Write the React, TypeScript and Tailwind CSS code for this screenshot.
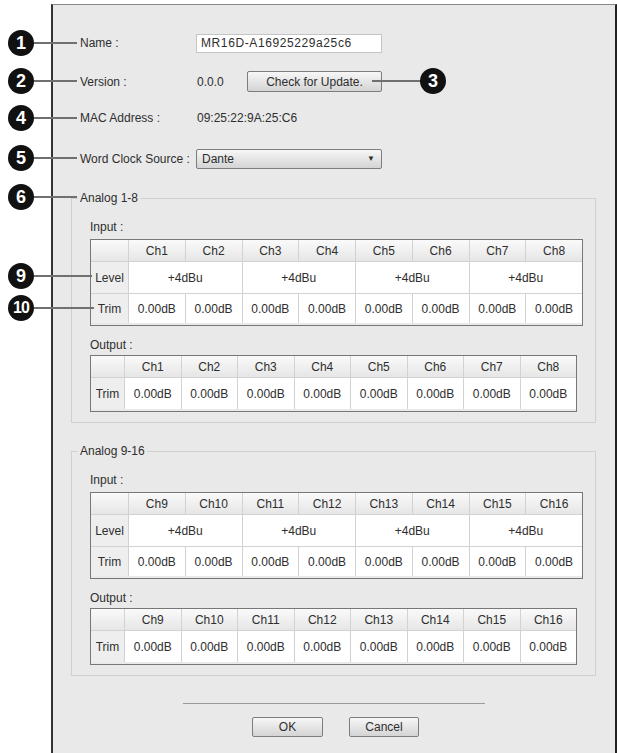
import React from "react";

const chs1 = ["Ch1", "Ch2", "Ch3", "Ch4", "Ch5", "Ch6", "Ch7", "Ch8"];
const chs2 = ["Ch9", "Ch10", "Ch11", "Ch12", "Ch13", "Ch14", "Ch15", "Ch16"];

const callouts = [
  { n: "1", circle: "left-[8px] top-[30px]", line: "left-[30px] top-[42px] w-[47px]" },
  { n: "2", circle: "left-[8px] top-[68px]", line: "left-[30px] top-[80px] w-[47px]" },
  { n: "3", circle: "left-[420px] top-[68px]", line: "left-[372px] top-[80px] w-[52px]" },
  { n: "4", circle: "left-[8px] top-[105px]", line: "left-[30px] top-[117px] w-[47px]" },
  { n: "5", circle: "left-[8px] top-[145px]", line: "left-[30px] top-[157px] w-[47px]" },
  { n: "6", circle: "left-[8px] top-[184px]", line: "left-[30px] top-[196px] w-[47px]" },
  { n: "9", circle: "left-[8px] top-[263px]", line: "left-[30px] top-[275px] w-[62px]" },
  { n: "10", circle: "left-[8px] top-[295px]", line: "left-[30px] top-[307px] w-[64px]" },
];

function HeadCell({ children }: { children?: React.ReactNode }) {
  return (
    <div className="flex items-center justify-center bg-gradient-to-b from-[#fafafa] to-[#e6e6e6]">
      {children}
    </div>
  );
}

function SideCell({ children }: { children: React.ReactNode }) {
  return <div className="flex items-center justify-center bg-[#eeeeee]">{children}</div>;
}

function Cell({ children, wide }: { children: React.ReactNode; wide?: boolean }) {
  return (
    <div className={"flex items-center justify-center bg-white " + (wide ? "col-span-2" : "")}>
      {children}
    </div>
  );
}

function InputTable({ chs }: { chs: string[] }) {
  return (
    <div className="w-[493px] border border-[#777777] bg-[#e9e9e9]">
      <div className="grid grid-cols-[37px_repeat(8,minmax(0,1fr))] grid-rows-[21px_31px_29px] gap-px bg-[#d2d2d2]">
        <HeadCell />
        {chs.map((c) => (
          <HeadCell key={c}>{c}</HeadCell>
        ))}
        <SideCell>Level</SideCell>
        {[0, 1, 2, 3].map((i) => (
          <Cell key={i} wide>
            +4dBu
          </Cell>
        ))}
        <SideCell>Trim</SideCell>
        {chs.map((c) => (
          <Cell key={c}>0.00dB</Cell>
        ))}
      </div>
      <div className="h-[2px]" />
    </div>
  );
}

function OutputTable({ chs }: { chs: string[] }) {
  return (
    <div className="w-[487px] border border-[#777777] bg-[#e9e9e9]">
      <div className="grid grid-cols-[33px_repeat(8,minmax(0,1fr))] grid-rows-[21px_31px] gap-px bg-[#d2d2d2]">
        <HeadCell />
        {chs.map((c) => (
          <HeadCell key={c}>{c}</HeadCell>
        ))}
        <SideCell>Trim</SideCell>
        {chs.map((c) => (
          <Cell key={c}>0.00dB</Cell>
        ))}
      </div>
      <div className="h-[2px]" />
    </div>
  );
}

function Group({ title, chs, className }: { title: string; chs: string[]; className: string }) {
  return (
    <fieldset className={"ml-[18px] w-[525px] border border-[#d0d0d0] " + className}>
      <legend className="ml-[6px] px-[2px] leading-[14px]">{title}</legend>
      <div className="pl-[18px] pb-[10px]">
        <div className="mt-[15px] leading-[14px]">Input :</div>
        <div className="mt-[5px]">
          <InputTable chs={chs} />
        </div>
        <div className="mt-[12px] leading-[14px]">Output :</div>
        <div className="mt-[3px]">
          <OutputTable chs={chs} />
        </div>
      </div>
    </fieldset>
  );
}

function Btn({ children, className }: { children: React.ReactNode; className: string }) {
  return (
    <div
      className={
        "flex items-center justify-center rounded-[2px] border border-[#7d7d7d] bg-gradient-to-b from-[#f7f7f7] to-[#d4d4d4] " +
        className
      }
    >
      {children}
    </div>
  );
}

function Select() {
  return (
    <div className="flex h-[20px] w-[186px] items-center justify-between rounded-[2px] border border-[#7d7d7d] bg-gradient-to-b from-[#f7f7f7] to-[#d4d4d4] pl-[5px] pr-[6px]">
      <span>Dante</span>
      <span className="text-[8px]">▼</span>
    </div>
  );
}

export default function App() {
  return (
    <div className="relative h-[753px] w-[617px] overflow-hidden bg-white pl-[51px] pt-[4px] font-['Liberation_Sans',Arial,sans-serif] text-[12px] text-[#2e2e2e]">
      <div className="h-[749px] w-[566px] border-l-2 border-r-2 border-t border-l-[#333333] border-r-[#222222] border-t-[#8a8a8a] bg-[#e9e9e9]">
        <div className="pl-[27px]">
          <div className="mt-[28px] flex h-[20px] items-center">
            <span className="w-[116px]">Name :</span>
            <div className="flex h-[19px] w-[186px] items-center border border-[#c4c4c4] bg-white px-[4px] tracking-[0.6px]">
              MR16D-A16925229a25c6
            </div>
          </div>
          <div className="mt-[18px] flex h-[21px] items-center">
            <span className="w-[116px]">Version :</span>
            <span className="w-[51px] pl-[1px]">0.0.0</span>
            <Btn className="h-[21px] w-[135px]">Check for Update.</Btn>
          </div>
          <div className="mt-[16px] flex h-[20px] items-center">
            <span className="w-[116px]">MAC Address :</span>
            <span className="pl-[1px]">09:25:22:9A:25:C6</span>
          </div>
          <div className="mt-[21px] flex h-[20px] items-center">
            <span className="w-[116px]">Word Clock Source :</span>
            <Select />
          </div>
        </div>

        <Group title="Analog 1-8" chs={chs1} className="mt-[22px]" />
        <Group title="Analog 9-16" chs={chs2} className="mt-[21px]" />

        <div className="ml-[130px] mt-[27px] h-[2px] w-[302px] border-t border-[#9a9a9a] border-b-white" />
        <div className="ml-[199px] mt-[12px] flex gap-[26px]">
          <Btn className="h-[20px] w-[71px]">OK</Btn>
          <Btn className="h-[20px] w-[70px]">Cancel</Btn>
        </div>
      </div>

      {callouts.map((c) => (
        <React.Fragment key={c.n}>
          <div className={"absolute h-[2px] bg-[#707070] " + c.line} />
          <div
            className={
              "absolute flex h-[26px] w-[26px] items-center justify-center rounded-full bg-[#111111] font-bold text-white " +
              (c.n === "10" ? "text-[16px] tracking-[-1px] " : "text-[18px] ") +
              c.circle
            }
          >
            {c.n}
          </div>
        </React.Fragment>
      ))}
    </div>
  );
}
